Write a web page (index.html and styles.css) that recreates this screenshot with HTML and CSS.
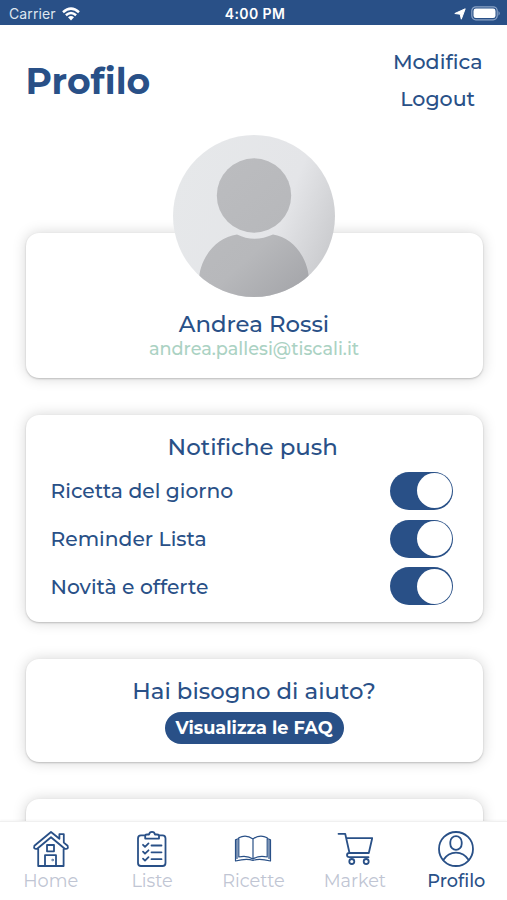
FILE: index.html
```html
<!DOCTYPE html>
<html lang="it">
<head>
<meta charset="utf-8">
<meta name="viewport" content="width=device-width, initial-scale=1">
<title>Profilo</title>
<link rel="stylesheet" href="styles.css">
</head>
<body>
<div class="app">
  <div class="status">
    <div class="carrier"><span>Carrier</span>
      <svg width="18" height="14" viewBox="0 0 18 14" fill="none" stroke="#fff" stroke-width="2.5"><path d="M1 5.2Q9-2 17 5.2M3.9 8.2Q9 3.7 14.1 8.2"/><path d="M6 10.3Q9 7.8 12 10.3L9 13.5Z" fill="#fff" stroke="none"/></svg>
    </div>
    <span class="time">4:00 PM</span>
    <div class="indicators">
      <svg width="12" height="12" viewBox="0 0 12 12"><path d="M11.2.8L7.3 11.2 6.2 6.2 .8 5.5Z" fill="#fff" stroke="#fff" stroke-width="1" stroke-linejoin="round"/></svg>
      <svg width="30" height="15" viewBox="0 0 30 15"><rect x=".8" y=".8" width="25.4" height="13" rx="4" fill="none" stroke="#8ba3c6" stroke-width="1.2"/><rect x="2.5" y="2.5" width="22" height="9.6" rx="2.4" fill="#fff"/><path d="M27.5 5Q30 7.3 27.5 9.8Z" fill="#8ba3c6"/></svg>
    </div>
  </div>
  <main class="content">
    <header class="header">
      <h1>Profilo</h1>
      <nav class="actions"><a>Modifica</a><a>Logout</a></nav>
    </header>
    <section class="card user">
      <svg class="avatar" width="162" height="162" viewBox="0 0 162 162">
        <defs>
          <linearGradient id="bg" x1="0" y1=".3" x2="1" y2=".7"><stop offset="0" stop-color="#e6e8ea"/><stop offset=".65" stop-color="#e4e5e8"/><stop offset="1" stop-color="#c9cacd"/></linearGradient>
          <linearGradient id="fg" gradientUnits="userSpaceOnUse" x1="40" y1="40" x2="135" y2="145"><stop offset="0" stop-color="#bbbcbf"/><stop offset=".6" stop-color="#b7b8bb"/><stop offset="1" stop-color="#a6a7ab"/></linearGradient>
          <clipPath id="round"><circle cx="81" cy="81" r="81"/></clipPath>
        </defs>
        <circle cx="81" cy="81" r="81" fill="url(#bg)"/>
        <circle cx="81" cy="60.5" r="37.2" fill="url(#fg)"/>
        <path clip-path="url(#round)" d="M26 146C26 124 43 102 64 99.5Q81 108 100 99.5C120 102 136 124 136 146V162H26Z" fill="url(#fg)"/>
      </svg>
      <div class="name">Andrea Rossi</div>
      <div class="email">andrea.pallesi@tiscali.it</div>
    </section>
    <section class="card push">
      <h2 class="push-title">Notifiche push</h2>
      <div class="row"><span>Ricetta del giorno</span><i class="switch"></i></div>
      <div class="row"><span>Reminder Lista</span><i class="switch"></i></div>
      <div class="row"><span>Novità e offerte</span><i class="switch"></i></div>
    </section>
    <section class="card help">
      <h2 class="help-title">Hai bisogno di aiuto?</h2>
      <a class="faq">Visualizza le FAQ</a>
    </section>
    <section class="card next"></section>
  </main>
  <nav class="tabs">
    <a class="tab">
      <svg width="38" height="38" viewBox="0 0 38 38"><path d="M6.2 19V36H31.6V19M19 2L2.4 15.8Q1.2 19.6 5.2 18.8L19 7.2 32.8 18.8Q36.8 19.6 35.6 15.8L31.8 12.6V4.2H27.4V8.8ZM15 15H22V21.3H15ZM13 36V25.2H24V36"/><circle cx="20.7" cy="30" r=".3"/></svg><span>Home</span></a>
    <a class="tab">
      <svg width="38" height="38" viewBox="0 0 38 38"><path d="M12 5.4H8Q5 5.4 5 8.4V33Q5 36 8 36H29.5Q32.5 36 32.5 33V8.4Q32.5 5.4 29.5 5.4H26M12.2 8.6V5.8Q12.2 4.5 14 4.5H16Q16.5 1.8 19 1.8T22 4.5H24Q26 4.5 26 6V8.6ZM10 14.8L12 16.8 15.5 13.4M10 21.7L12 23.7 15.5 20.3M10 28.6L12 30.6 15.5 27.2M18.5 15.5H28.5M18.5 22.3H28.5M18.5 29.2H28.5"/></svg><span>Liste</span></a>
    <a class="tab">
      <svg width="38" height="38" viewBox="0 0 38 38" class="book"><path d="M19 9Q12 3.8 4.8 7.8V27Q13 25 19 29Q25 25 33.2 27V7.8Q26 3.8 19 9V29M4.8 8.5L1.5 9.8V31Q13 28 19 30.5Q25 28 36.5 31V9.8L33.2 8.5M3 10V28.5M35 10V28.5"/></svg><span>Ricette</span></a>
    <a class="tab">
      <svg width="38" height="38" viewBox="0 0 38 38"><path d="M2.5 3.8H9.2L13.5 23H32.8L36.2 8.2H10.3M13.5 23Q11 23 11 25.1T13.4 27.2H32.5"/><circle cx="15.8" cy="31.5" r="2.5"/><circle cx="30.2" cy="31.5" r="2.5"/></svg><span>Market</span></a>
    <a class="tab profilo">
      <svg width="38" height="38" viewBox="0 0 38 38"><circle cx="19" cy="19" r="17"/><rect x="13.3" y="6.2" width="11.4" height="13.6" rx="5.7"/><path d="M6.3 30Q11 22.6 19 22.6T31.7 30"/></svg><span>Profilo</span></a>
  </nav>
</div>
</body>
</html>
```
FILE: styles.css
```css
* { box-sizing: border-box; }
body { margin: 0; background: #fff; color: #295087; font-family: Montserrat, Inter, "Open Sans", sans-serif; font-variant-ligatures: none; }
h1, h2 { margin: 0; font-weight: 500; }
.app { width: 507px; height: 900px; overflow: hidden; display: flex; flex-direction: column; }
.status { flex: none; height: 25px; padding: 2px 6px 0 9px; background: #295087; color: #fff; display: grid; grid-template-columns: 1fr auto 1fr; align-items: center; font-family: Inter, Roboto, sans-serif; font-size: 14px; line-height: 22px; }
.carrier { display: flex; align-items: center; gap: 6px; letter-spacing: .12px; color: #dfe6ef; }
.time { font-weight: 600; letter-spacing: .4px; }
.indicators { display: flex; align-items: center; justify-content: flex-end; gap: 5px; }
.content { flex: 1; min-height: 0; overflow: hidden; padding: 0 24.5px 0 25.5px; display: flex; flex-direction: column; }
.header { flex: none; height: 207.5px; display: flex; justify-content: space-between; }
h1 { padding-top: 34px; font-size: 36.2px; line-height: 44px; font-weight: 700; }
.actions { display: flex; flex-direction: column; align-items: center; padding-top: 18px; font-size: 20.6px; line-height: 37px; font-weight: 500; }
.card { flex: none; border-radius: 13px; background: #fff; box-shadow: 0 1px 2px rgba(0,0,0,.2), 0 0 14px rgba(0,0,0,.17); margin-bottom: 37px; display: flex; flex-direction: column; align-items: center; }
.user { height: 145px; }
.avatar { flex: none; margin-top: -97.5px; }
.name { margin-top: 12px; font-size: 22.8px; line-height: 30px; font-weight: 500; }
.email { font-size: 17.7px; line-height: 20px; color: #abd2c3; font-weight: 500; }
.push { height: 207.5px; padding: 17px 29.5px 0 25px; }
.push-title { font-size: 22.9px; line-height: 30px; margin-bottom: 5.5px; padding-left: 2px; }
.row { width: 100%; height: 47.7px; display: flex; justify-content: space-between; align-items: center; font-size: 20.3px; font-weight: 500; }
.switch { display: flex; justify-content: flex-end; width: 63px; height: 38px; border-radius: 19px; background: #295087; padding: 1.5px; }
.switch::after { content: ""; width: 35px; height: 35px; border-radius: 50%; background: #fff; }
.help { height: 103px; padding-top: 17px; }
.help-title { font-size: 22.8px; line-height: 31px; }
.faq { margin-top: 5px; width: 179px; height: 32px; border-radius: 16px; background: #295087; color: #fff; font-size: 17.7px; line-height: 31px; font-weight: 700; text-align: center; white-space: nowrap; }
.next { height: 80px; margin-bottom: 0; }
.tabs { flex: none; height: 79px; position: relative; background: #fff; border-top: 1px solid #f0f0f0; display: grid; grid-template-columns: repeat(5, 1fr); box-shadow: 0 -1px 2px rgba(0,0,0,.04); }
.tab { display: flex; flex-direction: column; align-items: center; padding-top: 8px; color: #c0c5d3; font-size: 17.7px; line-height: 25px; }
.tab svg { fill: none; stroke: #295087; stroke-width: 1.8; stroke-linecap: round; stroke-linejoin: round; }
.tab .book { stroke-width: 1.2; }
.profilo { color: #295087; font-weight: 500; }
```
